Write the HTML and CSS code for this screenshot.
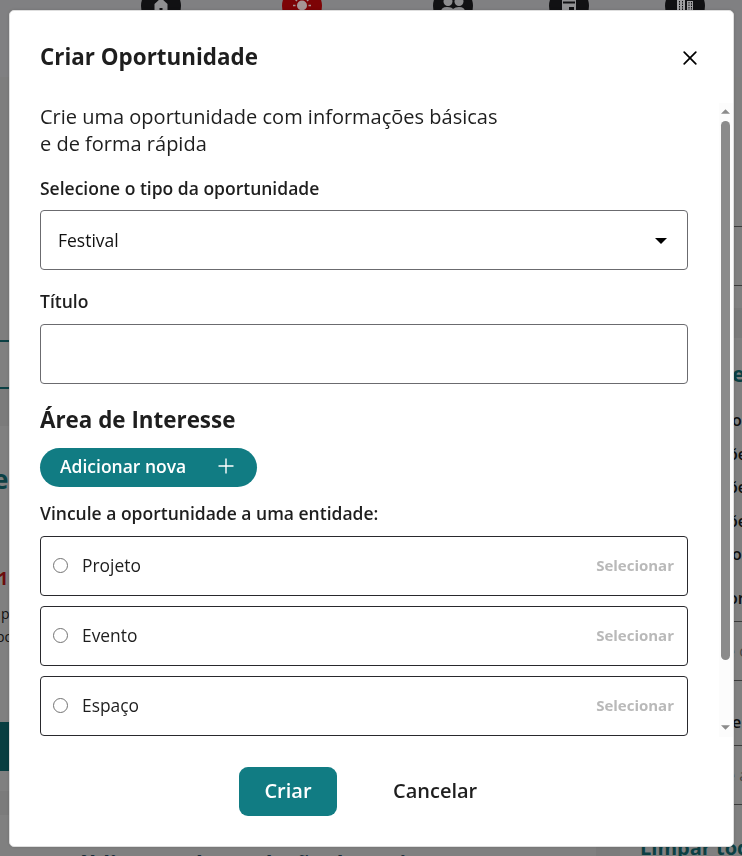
FILE: index.html
```html
<!DOCTYPE html>
<html lang="pt-BR">
<head>
<meta charset="utf-8">
<title>Criar Oportunidade</title>
<link rel="stylesheet" href="styles.css">
</head>
<body>
<div class="page">
  <header class="topbar">
    <span class="nav home"><svg viewBox="0 0 40 40"><path d="M13.5 33V18l6.500-6 6.500 6v15z" fill="#909092"/><path d="M18.500 22h3v11h-3z" fill="#111113"/></svg></span>
    <span class="nav active"><svg viewBox="0 0 40 40"><circle cx="20" cy="19.500" r="5" fill="#a59595"/><path d="M11 19.500h2.500M26.500 19.500h2.500M13 13l2 2M27 13l-2 2" stroke="#a59595" stroke-width="1.5"/></svg></span>
    <span class="nav agents"><svg viewBox="0 0 40 40" fill="#8c8c8e"><circle cx="15" cy="15.500" r="4.500"/><circle cx="26" cy="15.500" r="4.500"/><path d="M8 26q0-5 6-5 5 0 6 2 2-2 6-2 6 0 6 5z"/></svg></span>
    <span class="nav events"><svg viewBox="0 0 40 40"><path d="M13 9h14v18H13z" fill="#929294"/><path d="M14 16.500h12" stroke="#111113" stroke-width="2"/><path d="M20 21h5v5h-5z" fill="#111113"/></svg></span>
    <span class="nav spaces"><svg viewBox="0 0 40 40"><path d="M12 10h8v18h-8zM22 15h6v12h-6z" fill="#a0a0a2"/><path d="M14.500 10v16M17.500 10v16M24 16v10M26.500 16v10" stroke="#111113" stroke-dasharray="1.5 1"/></svg></span>
  </header>
  <div class="columns">
    <main class="results">
      <div class="tab-space"></div>
      <div class="outlined"></div>
      <div class="filler"></div>
      <div class="card">
        <div class="card-title">e</div>
        <div class="card-count">1</div>
        <p class="card-text first">p</p>
        <p class="card-text">po</p>
        <div class="card-button"></div>
      </div>
      <div class="next-card"><div class="next-title">Público geral na seleção de projetos</div></div>
    </main>
    <aside class="filters">
      <div class="search"></div>
      <div class="band"></div>
      <div class="filter-title">e</div>
      <div class="option">o</div>
      <div class="option cut">õe</div>
      <div class="option cut">õe</div>
      <div class="option cut">õe</div>
      <div class="option">o</div>
      <div class="option cut last">or</div>
      <div class="select">e&nbsp;o</div>
      <div class="label">e</div>
      <div class="select">e&nbsp;a</div>
      <div class="clear">Limpar todos os filtros</div>
    </aside>
  </div>
</div>

<section class="modal" role="dialog">
  <header class="modal-header">
    <h1>Criar Oportunidade</h1>
    <svg class="close" viewBox="0 0 14 14"><path d="M1.2 1.2l11.6 11.6M12.8 1.2L1.2 12.8" stroke="#000" stroke-width="1.7" stroke-linecap="round"/></svg>
  </header>
  <div class="modal-body">
    <div class="form">
      <p class="intro">Crie uma oportunidade com informações básicas<br>e de forma rápida</p>
      <div class="field-label">Selecione o tipo da oportunidade</div>
      <div class="control"><span>Festival</span><svg class="caret" viewBox="0 0 12 6"><path d="M0 0h12L6 6z"/></svg></div>
      <div class="field-label title-label">Título</div>
      <div class="control"></div>
      <h2>Área de Interesse</h2>
      <div class="add"><span>Adicionar nova</span><svg class="plus" viewBox="0 0 16 16"><path d="M8 .5v15M.5 8h15" stroke="#fff" stroke-width="1.4"/></svg></div>
      <div class="field-label link-label">Vincule a oportunidade a uma entidade:</div>
      <div class="entity"><i class="radio"></i><span>Projeto</span><b>Selecionar</b></div>
      <div class="entity"><i class="radio"></i><span>Evento</span><b>Selecionar</b></div>
      <div class="entity"><i class="radio"></i><span>Espaço</span><b>Selecionar</b></div>
    </div>
    <div class="scrollbar">
      <svg class="arrow" viewBox="0 0 10 5"><path d="M0 5h10L5 0z" fill="#8b8b8b"/></svg>
      <div class="thumb"></div>
      <svg class="arrow down" viewBox="0 0 10 5"><path d="M0 0h10L5 5z" fill="#8b8b8b"/></svg>
    </div>
  </div>
  <footer class="actions">
    <div class="primary">Criar</div>
    <div class="cancel">Cancelar</div>
  </footer>
</section>
</body>
</html>
```

FILE: styles.css
```css
* { box-sizing: border-box; }
html, body { margin: 0; height: 856px; overflow: hidden; }
body { font-family: "Open Sans", "Noto Sans", sans-serif; color: #1e1e1e; }
p, h1, h2 { margin: 0; }
svg { display: block; }

.page { height: 856px; overflow: hidden; background: #7b7b7b; }
.topbar { display: flex; height: 77px; padding-left: 141px; background: #808082; box-shadow: 0 2px 8px rgba(0,0,0,.18); }
.nav { width: 40px; height: 40px; margin-top: -14px; border-radius: 50%; background: #111113; overflow: hidden; }
.nav.home { margin-left: 0; }
.nav.active { margin-left: 101px; background: #7d0406; }
.nav.agents { margin-left: 111px; }
.nav.events { margin-left: 76px; }
.nav.spaces { margin-left: 76px; }
.columns { display: flex; height: 779px; }
.results { width: 596px; background: #808080; }
.tab-space { height: 263px; background: #7e7e7e; }
.outlined { height: 49px; border-top: 2px solid #0b4044; border-bottom: 2px solid #0b4044; }
.filler { height: 37px; background: #7b7b7b; }
.card { height: 365px; }
.card-title { height: 108px; padding-top: 31px; margin-left: -7px; font-size: 26px; line-height: 44px; font-weight: 700; color: #0b4044; }
.card-count { height: 79px; padding-top: 32px; margin-left: -2px; font-size: 18px; line-height: 24px; font-weight: 700; color: #6b0d0d; }
.card-text { height: 23px; font-size: 14px; line-height: 23px; margin-left: -4px; color: #111; }
.card-text.first { margin-left: 1px; margin-top: -11px; }
.card-button { height: 49px; margin-top: 74px; background: #093e41; }
.next-card { height: 65px; border-top: 24px solid #7b7b7b; }
.next-title { padding: 32px 0 0 61px; font-size: 22px; line-height: 30px; font-weight: 700; color: #172b38; white-space: nowrap; }
.filters { width: 122px; margin-left: 24px; padding-left: 112px; background: #808080; white-space: nowrap; font-size: 16px; font-weight: 600; color: #0f0f0f; }
.search { height: 60px; margin: 149px 0 22px -12px; border-top: 1px solid #3c3c3c; border-bottom: 1px solid #3c3c3c; }
.band { height: 30px; margin-left: -112px; background: #7a7a7a; }
.filter-title { height: 66px; padding-top: 19px; line-height: 32px; font-size: 22px; font-weight: 700; color: #0b4044; }
.option { height: 33.6px; line-height: 33.6px; }
.option.cut { margin-left: -4px; }
.option.last { height: 49px; padding-top: 10px; }
.select { height: 60px; margin-left: -12px; padding-left: 6px; border-top: 1px solid #3c3c3c; border-bottom: 1px solid #3c3c3c; font-weight: 400; line-height: 58px; color: #454545; }
.label { height: 64px; line-height: 82px; }
.clear { margin: 29px 0 0 -92px; font-size: 20px; line-height: 28px; font-weight: 700; color: #0b4044; }

.modal { position: fixed; left: 9px; top: 10px; width: 725px; height: 837px; display: flex; flex-direction: column; background: #fff; border: 1px solid #dedede; border-radius: 5px; box-shadow: 0 0 3px rgba(0,0,0,.15); }
.modal-header { display: flex; justify-content: space-between; height: 92px; padding: 28px 36px 0 30px; }
h1 { font-size: 22.4px; line-height: 35px; font-weight: 700; }
.close { width: 14px; height: 14px; margin-top: 12px; }
.modal-body { display: flex; justify-content: space-between; height: 634px; padding-left: 30px; }
.form { width: 648px; }
.intro { font-size: 20px; line-height: 27px; }
.field-label { margin-top: 18px; font-size: 17.5px; line-height: 24px; font-weight: 600; }
.intro + .field-label { margin-top: 19px; }
.control { display: flex; align-items: center; justify-content: space-between; height: 60px; margin-top: 10px; padding: 0 20px 0 17px; border: 1px solid #6b6b6f; border-radius: 4px; font-size: 17.5px; color: #111; }
.caret { width: 12px; height: 6px; margin-top: 1px; }
.title-label { margin-top: 19px; }
.title-label + .control { margin-top: 11px; }
h2 { margin-top: 19px; font-size: 22.4px; line-height: 34px; font-weight: 700; }
.add { display: flex; width: 217px; height: 39px; margin-top: 11px; padding: 0 23px 3px 20px; align-items: center; justify-content: space-between; border-radius: 20px; background: #117c83; color: #fff; font-size: 17.5px; font-weight: 600; }
.plus { width: 16px; height: 16px; }
.link-label { margin-top: 14px; }
.entity { display: flex; align-items: center; height: 60px; margin-bottom: 10px; padding: 0 13px 2px 12px; border: 1px solid #29292d; border-radius: 4px; font-size: 17.4px; }
.link-label + .entity { margin-top: 11px; }
.radio { width: 15px; height: 15px; margin-right: 14px; border: 1px solid #737373; border-radius: 50%; }
.entity b { margin-left: auto; font-size: 15px; color: #b9b9b9; }
.scrollbar { width: 14px; height: 634px; padding: 6px 0 0 2px; background: #fcfcfc; }
.arrow { width: 9px; height: 5px; }
.thumb { width: 9px; height: 539px; margin: 7px 0 65px; border-radius: 5px; background: #8b8b8b; }
.actions { display: flex; padding: 30px 0 0 229px; font-size: 20px; font-weight: 600; line-height: 48px; }
.primary { width: 98px; height: 49px; border-radius: 9px; background: #117c83; color: #fff; text-align: center; }
.cancel { margin-left: 56px; }
```
